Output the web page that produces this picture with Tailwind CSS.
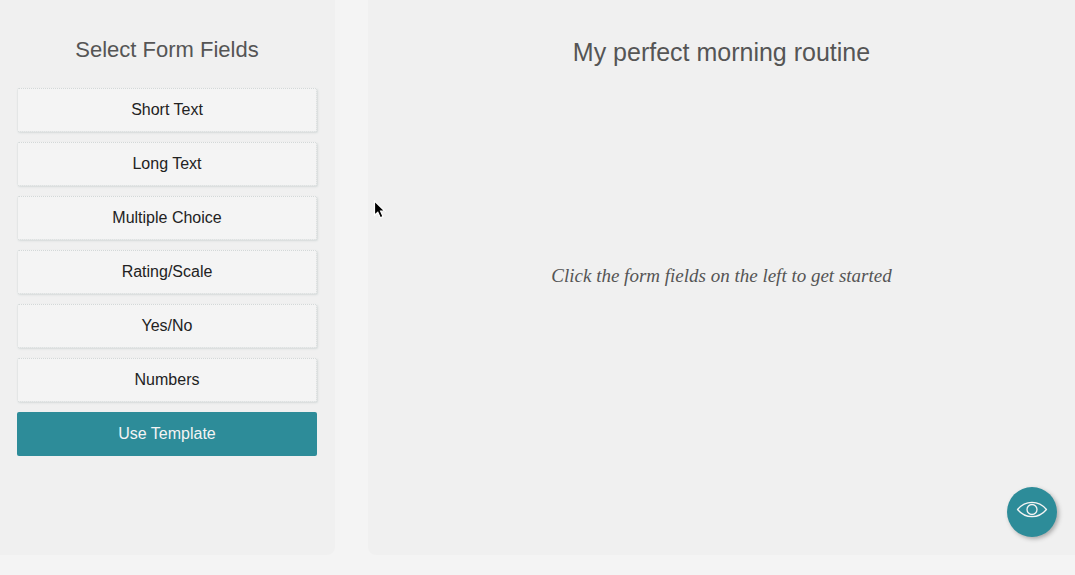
<!DOCTYPE html>
<html lang="en">
<head>
<meta charset="utf-8">
<meta name="viewport" content="width=device-width, initial-scale=1">
<title>Form builder</title>
<script src="https://cdn.jsdelivr.net/npm/@tailwindcss/browser@4"></script>
</head>
<body class="flex min-h-screen gap-[33px] bg-[#f4f4f4] pb-5 font-['Liberation_Sans',Arial,sans-serif] text-[#222]">
<aside class="w-[335px] shrink-0 rounded-br-lg bg-[#f0f0f0] pr-[18px] pl-[17px]">
  <h2 class="pt-8 text-center text-[22px] leading-9 text-[#555]">Select Form Fields</h2>
  <div class="mt-5 flex flex-col gap-2.5 text-base">
    <button type="button" class="h-11 rounded-xs border border-dotted border-[#d3d8d8] bg-[#f4f4f4] shadow-[1px_1px_2px_#d5dada]">Short Text</button>
    <button type="button" class="h-11 rounded-xs border border-dotted border-[#d3d8d8] bg-[#f4f4f4] shadow-[1px_1px_2px_#d5dada]">Long Text</button>
    <button type="button" class="h-11 rounded-xs border border-dotted border-[#d3d8d8] bg-[#f4f4f4] shadow-[1px_1px_2px_#d5dada]">Multiple Choice</button>
    <button type="button" class="h-11 rounded-xs border border-dotted border-[#d3d8d8] bg-[#f4f4f4] shadow-[1px_1px_2px_#d5dada]">Rating/Scale</button>
    <button type="button" class="h-11 rounded-xs border border-dotted border-[#d3d8d8] bg-[#f4f4f4] shadow-[1px_1px_2px_#d5dada]">Yes/No</button>
    <button type="button" class="h-11 rounded-xs border border-dotted border-[#d3d8d8] bg-[#f4f4f4] shadow-[1px_1px_2px_#d5dada]">Numbers</button>
    <button type="button" class="h-11 rounded-xs bg-[#2d8c99] text-[#f4f4f4]">Use Template</button>
  </div>
</aside>
<main class="flex min-w-0 flex-1 flex-col rounded-bl-lg bg-[#f0f0f0]">
  <h1 class="pt-8 text-center text-[25px] leading-10 text-[#555]">My perfect morning routine</h1>
  <p class="mt-48 text-center font-['Liberation_Serif',serif] text-[19px] leading-6 text-[#555] italic">Click the form fields on the left to get started</p>
</main>
<button type="button" aria-label="Preview form" class="fixed right-[18px] bottom-[38px] flex size-[50px] items-start justify-center rounded-full bg-[#2d8c99] pt-3 text-[#f4f4f4] shadow-[2px_2px_4px_#aaa]">
  <svg class="h-5 w-8" viewBox="0 0 32 20" fill="none" stroke="currentColor" stroke-width="1.3" aria-hidden="true">
    <path d="M1.5 10.500C9.500 1 22.500 1 30.500 10.500C22.500 20 9.500 20 1.500 10.500Z" stroke-linejoin="round"/>
    <circle cx="16" cy="10.500" r="5"/>
  </svg>
</button>
<svg class="pointer-events-none fixed top-[200px] left-[373px] h-5 w-4" viewBox="0 0 16 20" aria-hidden="true">
  <path d="M1.500 1V15.200L4.800 12.200L7.300 17.800L10 16.600L7.600 11.200H12Z" fill="#000" stroke="#fff" stroke-width="1.200"/>
</svg>
</body>
</html>
